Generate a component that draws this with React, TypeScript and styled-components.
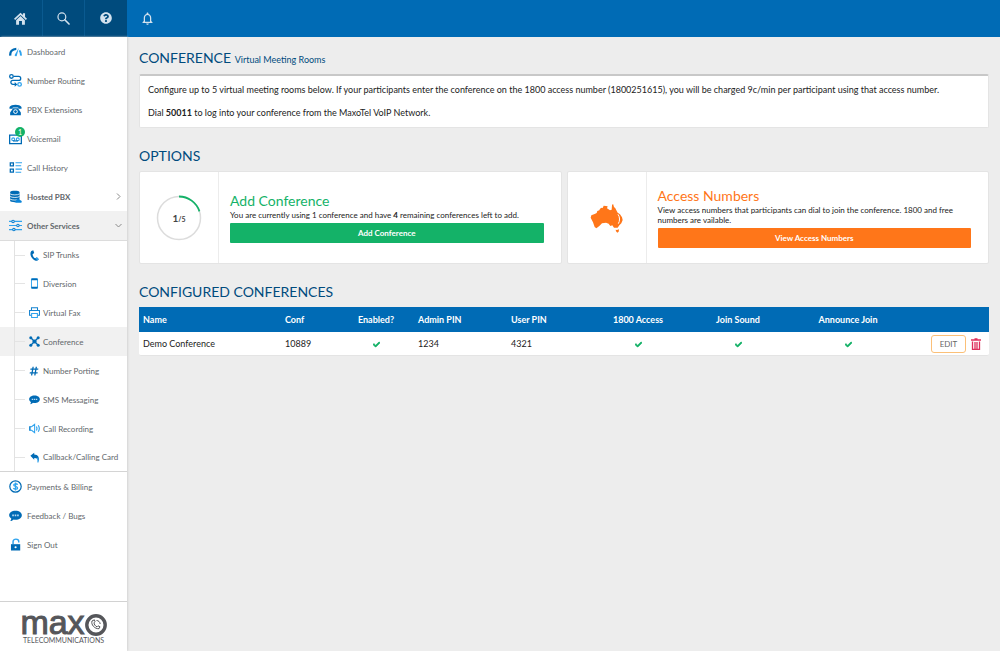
import React from "react";
import styled, { createGlobalStyle, css } from "styled-components";
import { FaCheck, FaHashtag, FaQuestionCircle } from "react-icons/fa";
import { MdNotificationsNone } from "react-icons/md";

const NAVY = "#004b7d";
const BLUE = "#006bb5";
const SKY = "#2ea3ee";
const GREEN = "#14b268";
const ORANGE = "#ff7619";

const GlobalStyle = createGlobalStyle`
  *, *::before, *::after { box-sizing: border-box; }
  body {
    margin: 0;
    background: #ededed;
    color: #222;
    font-family: Lato, "Liberation Sans", sans-serif;
    font-size: 9px;
    line-height: 12px;
  }
  button { font: inherit; cursor: pointer; }
  svg { display: block; }
`;

const Shell = styled.div`
  display: flex;
  flex-direction: column;
  min-height: 100vh;
`;

const TopBar = styled.header`
  display: flex;
  height: 37px;
  background: ${BLUE};
`;

const TopGroup = styled.div`
  display: flex;
  width: 127px;
  background: ${NAVY};
`;

const TopButton = styled.button`
  display: flex;
  align-items: center;
  justify-content: center;
  width: 41px;
  height: 36px;
  padding: 0;
  border: 0;
  background: transparent;
  color: #d3e2ee;
  ${TopGroup} & { flex: 1; }
  ${TopGroup} & + & { border-left: 1px solid #0a5a90; }
`;

const Body = styled.div`
  display: flex;
  flex: 1;
`;

const Sidebar = styled.aside`
  display: flex;
  flex-direction: column;
  flex: 0 0 127px;
  min-width: 0;
  background: #fff;
  box-shadow: 1px 0 2px #d4d4d4;
`;

const Nav = styled.nav`
  flex: 1;
`;

const List = styled.ul`
  margin: 0;
  padding: 0;
  list-style: none;
`;

const SubList = styled(List)`
  border-top: 1px solid #dcdcdc;
  border-bottom: 1px solid #d4d4d4;
`;

const NavLink = styled.a<{ $strong?: boolean; $active?: boolean }>`
  display: flex;
  align-items: center;
  gap: 5px;
  height: 29px;
  padding: 0 5px 0 9px;
  color: #62676b;
  font-size: 8px;
  font-weight: ${(p) => (p.$strong ? 700 : 400)};
  text-decoration: none;
  white-space: nowrap;
  background: ${(p) => (p.$active ? "#f1f1f1" : "transparent")};
`;

const SubLink = styled(NavLink)`
  gap: 3px;
  padding: 0 0 0 14px;
  ${SubList} li:first-child & { height: 28px; }
  ${SubList} li:last-child & { height: 28px; }
`;

const Branch = styled.span`
  display: flex;
  align-items: center;
  align-self: stretch;
  width: 11px;
  border-left: 1px solid #e2e2e2;
  &::after {
    content: "";
    flex: 1;
    height: 1px;
    background: #e4e4e4;
  }
`;

const IconBox = styled.span`
  position: relative;
  display: flex;
  justify-content: center;
  width: 13px;
  color: ${BLUE};
  ${SubList} & { width: 12px; }
`;

const Label = styled.span`
  flex: 1;
`;

const Count = styled.span`
  position: absolute;
  top: -5px;
  right: -3px;
  width: 10px;
  height: 10px;
  border-radius: 5px;
  background: ${GREEN};
  color: #fff;
  font-size: 7px;
  line-height: 10px;
  text-align: center;
`;

const Brand = styled.div`
  display: flex;
  flex-direction: column;
  align-items: center;
  height: 50px;
  padding-top: 9px;
  border-top: 1px solid #d2d2d2;
  color: #55565a;
`;

const BrandName = styled.div`
  display: flex;
  align-items: flex-start;
  height: 25px;
  font: 34px/22px "Liberation Sans", sans-serif;
  -webkit-text-stroke: 1px #55565a;
  svg { align-self: flex-end; }
`;

const BrandLine = styled.div`
  font-size: 7px;
  line-height: 8px;
`;

const Main = styled.main`
  flex: 1;
  min-width: 0;
  padding: 11px 11px 12px 12px;
`;

const headingText = css`
  margin: 0;
  color: ${NAVY};
  font-weight: 400;
  font-size: 14px;
  line-height: 20px;
`;

const Title = styled.h1`
  ${headingText}
  margin-bottom: 4px;
`;

const SubTitle = styled.small`
  font-size: 9px;
`;

const Heading = styled.h2`
  ${headingText}
  margin-top: 18px;
  margin-bottom: 5px;
`;

const surface = css`
  background: #fff;
  border: 1px solid #e4e4e4;
  border-radius: 2px;
`;

const Notice = styled.section`
  ${surface}
  border-top: 2px solid #c8c8c8;
  padding: 6px 8px;
`;

const Paragraph = styled.p`
  margin: 0;
  line-height: 16px;
  & + & { margin-top: 7px; }
`;

const Options = styled.div`
  display: grid;
  grid-template-columns: 1fr 1fr;
  gap: 5px;
`;

const Card = styled.section`
  ${surface}
  display: flex;
  min-height: 93px;
`;

const CardArt = styled.div`
  display: flex;
  align-items: center;
  justify-content: center;
  flex: 0 0 79px;
  border-right: 1px solid #ececec;
`;

const CardBody = styled.div<{ $tone: string }>`
  display: flex;
  flex-direction: column;
  justify-content: center;
  flex: 1;
  padding: 0 17px 0 11px;
  h3 {
    margin: 0;
    color: ${(p) => p.$tone};
    font-size: 14px;
    font-weight: 400;
    line-height: 18px;
  }
  p {
    margin: 0 0 3px;
    font-size: 8px;
    line-height: 10px;
  }
  button {
    height: 20px;
    padding: 0;
    border: 0;
    border-radius: 1px;
    background: ${(p) => p.$tone};
    color: #fff;
    font-size: 8px;
    font-weight: 700;
  }
`;

const Table = styled.table`
  ${surface}
  width: 100%;
  table-layout: fixed;
  border-collapse: separate;
  border-spacing: 0;
  border-width: 0 0 1px;
`;

const HeadCell = styled.th<{ $center?: boolean }>`
  height: 25px;
  padding: 0 4px;
  background: ${BLUE};
  color: #fff;
  font-weight: 700;
  text-align: ${(p) => (p.$center ? "center" : "left")};
`;

const Cell = styled.td<{ $center?: boolean }>`
  height: 23px;
  padding: 0 4px;
  text-align: ${(p) => (p.$center ? "center" : "left")};
  svg { display: inline-block; vertical-align: middle; }
`;

const Actions = styled.div`
  display: flex;
  align-items: center;
  justify-content: flex-end;
  gap: 5px;
  padding-right: 4px;
`;

const EditButton = styled.button`
  width: 35px;
  height: 18px;
  padding: 0;
  border: 1px solid #fbc078;
  border-radius: 3px;
  background: #fff;
  color: #666;
  font-size: 8px;
`;

const IconButton = styled.button`
  padding: 0;
  border: 0;
  background: transparent;
`;

const Svg = ({ size = 13, children }: { size?: number; children: React.ReactNode }) => (
  <svg width={size} height={size} viewBox="0 0 16 16" fill="none" aria-hidden="true">
    {children}
  </svg>
);

const HomeIcon = () => (
  <Svg size={13}>
    <path d="M8 .8 0 8.4l1.4 1.4L8 3.6l6.6 6.2L16 8.4l-2.4-2.3V1.6h-2.6v2z" fill="currentColor" />
    <path d="M2.6 10 8 5l5.4 5v5.6H9.8V11H6.2v4.6H2.6z" fill="currentColor" />
  </Svg>
);
const SearchIcon = () => (
  <Svg size={13}>
    <circle cx="6" cy="6" r="4.8" stroke="currentColor" strokeWidth="1.5" />
    <path d="m9.6 9.6 5.2 5.2" stroke="currentColor" strokeWidth="2" strokeLinecap="round" />
  </Svg>
);
const GaugeIcon = () => (
  <Svg>
    <path d="M1.6 13C1 8 4 5 9 4.800" stroke={BLUE} strokeWidth="2.800" />
    <path d="M12.800 6.600c1.400 1.600 2 3.600 1.800 6.400" stroke={SKY} strokeWidth="2.400" />
    <path d="m7 12.400 5-8.800-2.400 9.600c-.8 1.200-3 .6-2.600-.8z" fill={SKY} />
  </Svg>
);
const RoutingIcon = () => (
  <Svg>
    <circle cx="3" cy="3" r="2.200" stroke={BLUE} strokeWidth="1.600" />
    <circle cx="13" cy="12.800" r="2.200" stroke={SKY} strokeWidth="1.600" />
    <path d="M5.600 3H12a2.400 2.400 0 0 1 0 4.800H4.800a2.500 2.500 0 0 0 0 5H8" stroke={BLUE} strokeWidth="1.600" />
    <path d="m7 9.800 3.200 3L7 15.800z" fill={BLUE} />
  </Svg>
);
const DeskPhoneIcon = () => (
  <Svg>
    <path d="M.6 7V5C3 1.400 13 1.400 15.400 5v2h-4V5.400H4.600V7z" fill={BLUE} />
    <path d="M5 6.600h6l3.600 5V15H1.400v-3.400z" fill={BLUE} />
    <circle cx="8" cy="10.600" r="2.300" stroke="#fff" strokeWidth="1.200" />
  </Svg>
);
const VoicemailIcon = () => (
  <Svg>
    <path d="M.8 3.800h14.400v10.400H.8z" stroke={BLUE} strokeWidth="1.600" />
    <circle cx="5.200" cy="9" r="1.800" stroke={SKY} strokeWidth="1.400" />
    <circle cx="10.800" cy="9" r="1.800" stroke={SKY} strokeWidth="1.400" />
    <path d="M5 11h6" stroke={BLUE} strokeWidth="1.400" />
  </Svg>
);
const HistoryIcon = () => (
  <Svg>
    <path d="M1.600 2.200h3.800v3.800H1.600zM1.600 10h3.800v3.800H1.600z" stroke={BLUE} strokeWidth="1.600" />
    <path d="M8 2.200h8M8 5.800h7M8 10h8M8 13.800h7" stroke={SKY} strokeWidth="1.400" />
  </Svg>
);
const ServerIcon = () => (
  <Svg>
    <path d="M1.400 2.800C1.400.4 13 .4 13 2.800v10.400c0 2.400-11.600 2.400-11.600 0z" fill={BLUE} />
    <path d="M1.400 4.800c2 1.600 9.600 1.600 11.600 0M1.400 8c2 1.600 9.600 1.600 11.600 0M1.400 11.200c2 1.600 9.600 1.600 11.600 0" stroke="#fff" />
    <path d="M9 15.800c-2-.2-1.800-2.800 0-3 .4-2.400 4-2.400 4.400-.2 3 0 3 3.200.6 3.200z" fill="#0a84d8" />
  </Svg>
);
const SlidersIcon = () => (
  <Svg>
    <path d="M0 3h16M0 8h16M0 13h16" stroke={SKY} strokeWidth="1.400" />
    <g fill="#fff" stroke="#1582cf" strokeWidth="1.400">
      <circle cx="5" cy="3" r="1.500" />
      <circle cx="11" cy="8" r="1.500" />
      <circle cx="6" cy="13" r="1.500" />
    </g>
  </Svg>
);
const HandsetIcon = () => (
  <Svg size={11}>
    <path d="M3.400 1.600 6.200.4l1.400 4-2.400 1.600C5.400 8.400 7 11 9 12l2.400-1.600 3 3.200-2.600 2.200C5 16-.6 6 3.400 1.600z" fill={BLUE} />
    <path d="m9.400 12.200 2.200-1.600 2.600 3-2 1.800z" fill={SKY} />
  </Svg>
);
const MobileIcon = () => (
  <Svg size={11}>
    <rect x="3.600" y="1" width="8.800" height="14" rx="1" stroke={SKY} strokeWidth="1.400" />
    <path d="M3.400 2h9.200M3.400 14h9.200" stroke={BLUE} strokeWidth="2.200" />
  </Svg>
);
const PrinterIcon = () => (
  <Svg size={11}>
    <path d="M3.600 5V1h8.800v4M3.600 12H.8V5h14.400v7h-2.800" stroke="#1582cf" strokeWidth="1.500" />
    <path d="M3.800 9.400h8.400v5.800H3.800z" stroke={SKY} strokeWidth="1.500" />
  </Svg>
);
const HubIcon = () => (
  <Svg size={11}>
    <path d="m2.600 2.600 10.800 10.800M13.400 2.600 2.600 13.400" stroke={BLUE} strokeWidth="2" />
    <g fill={BLUE}>
      <circle cx="2.600" cy="2.600" r="2.200" />
      <circle cx="13.400" cy="2.600" r="2.200" />
      <circle cx="2.600" cy="13.400" r="2.200" />
      <circle cx="13.400" cy="13.400" r="2.200" />
      <circle cx="8" cy="8" r="3" />
    </g>
  </Svg>
);
const ChatIcon = ({ size = 11 }: { size?: number }) => (
  <Svg size={size}>
    <path d="M8 2c4.600 0 7.800 2.400 7.800 5.600S12.600 13.200 8 13.200c-.8 0-1.600-.2-2.200-.4-1 1-2.400 2-4.200 2 .8-1 1.200-2 1.200-3.200C1.200 10.600.2 9.200.2 7.600.2 4.400 3.400 2 8 2z" fill={BLUE} />
    <path d="M4 6.800h2v2H4zM7 6.800h2v2H7zM10 6.800h2v2h-2z" fill="#b7dcf6" />
  </Svg>
);
const SpeakerIcon = () => (
  <Svg size={11}>
    <path d="M1 5.400h2.800L8.200 2v12l-4.400-3.400H1z" stroke={SKY} strokeWidth="1.500" />
    <path d="M10.800 5c1 2 1 4 0 6M13.400 3.200c2 3 2 6.600 0 9.600" stroke={SKY} strokeWidth="1.700" />
    <path d="M1.400 5v6" stroke={BLUE} strokeWidth="1.400" />
  </Svg>
);
const ReplyIcon = () => (
  <Svg size={11}>
    <path d="M2 5.600 7.600 1v2.800c5.800 0 8 4.200 6.200 11.200-.2-4.400-1.800-6.400-6.200-6.400v2.800z" fill={BLUE} />
    <path d="M12 8.600c1 1.600 1.400 3.400 1 6.600" stroke={SKY} strokeWidth="1.600" />
  </Svg>
);
const DollarIcon = () => (
  <Svg>
    <circle cx="8" cy="8" r="7" stroke={BLUE} strokeWidth="1.500" />
    <path d="M10.600 5.800C9.800 4.200 5.800 4.200 5.800 6.200c0 2.200 4.800 1.200 4.800 3.600 0 2-4.200 2-5.200.2M8 3v10" stroke={SKY} strokeWidth="1.600" />
  </Svg>
);
const LockIcon = () => (
  <Svg>
    <path d="M5 7.600V4.400c0-4 7-4 7 0v1.200" stroke={SKY} strokeWidth="1.800" />
    <path d="M2.400 7.600h11.400v7.800H2.400z" fill={BLUE} />
    <circle cx="8.100" cy="11.400" r="1.300" fill="#fff" />
  </Svg>
);
const Chevron = ({ down }: { down?: boolean }) => (
  <svg width="7" height="7" viewBox="0 0 7 7" fill="none" aria-hidden="true">
    <path d={down ? "M.5 2 3.500 5l3-3" : "M2 .5l3 3-3 3"} stroke="#8a8a8a" />
  </svg>
);
const BrandMark = () => (
  <svg width="22" height="22" viewBox="0 0 22 22" fill="none" aria-hidden="true">
    <circle cx="11" cy="11" r="9.200" stroke="#55565a" strokeWidth="3.400" />
    <path d="M7 7c-1.200 3.500 2.500 8 7 7.700l1-1.900-2-1-1 1c-1.500-.5-3-2.500-3-4l1-1-.6-2z" stroke="#55565a" />
    <path d="M11.500 6.500c2 0 3.500 1.500 3.700 3.500" stroke="#55565a" />
  </svg>
);
const Ring = () => (
  <svg width="46" height="46" viewBox="0 0 46 46" fill="none" role="img" aria-label="1 of 5 used">
    <circle cx="23" cy="23" r="21.500" stroke="#dcdcdc" strokeWidth="1.500" />
    <path d="M23 1.500A21.500 21.500 0 0 1 43.450 16.360" stroke={GREEN} strokeWidth="1.800" />
    <text x="23" y="27" textAnchor="middle" fill="#444" fontSize="10" fontWeight="700">
      1<tspan fontSize="7">/5</tspan>
    </text>
  </svg>
);
const Australia = () => (
  <svg width="34" height="30" viewBox="0 0 102 90" aria-hidden="true">
    <path
      fill={ORANGE}
      d="M2 44 4 37 14 33 20 30 22 24 28 22 30 17 35 14 38 15 41 8 48 9 53 10 51 16 60 22 65 20 66 7 69 2 72 12 76 16 79 22 83 29 90 34 96 43 98 51 94 61 88 67 83 74 72 74 67 67 61 69 56 62 48 59 36 61 28 69 19 76 14 72 9 58z"
    />
    <path d="M84 34c6 8 6 20 1 28" stroke="#fff" strokeWidth="3" fill="none" />
    <path d="m77 80 4 1 6-2-1 7-4 3-4-4z" fill={ORANGE} />
  </svg>
);
const Trash = () => (
  <svg width="10" height="12" viewBox="0 0 10 12" fill="none" aria-hidden="true">
    <path d="M0 2h10M3.500 1h3" stroke="#de2f5c" strokeWidth="1.500" />
    <path d="M1.500 3.500v8h7v-8M4 4v7M6 4v7" stroke="#de2f5c" strokeWidth="1.300" />
  </svg>
);

type Item = { label: string; icon: React.ReactNode; active?: boolean };

const topItems: Item[] = [
  { label: "Dashboard", icon: <GaugeIcon /> },
  { label: "Number Routing", icon: <RoutingIcon /> },
  { label: "PBX Extensions", icon: <DeskPhoneIcon /> },
  { label: "Voicemail", icon: <><VoicemailIcon /><Count>1</Count></> },
  { label: "Call History", icon: <HistoryIcon /> },
];
const services: Item[] = [
  { label: "SIP Trunks", icon: <HandsetIcon /> },
  { label: "Diversion", icon: <MobileIcon /> },
  { label: "Virtual Fax", icon: <PrinterIcon /> },
  { label: "Conference", icon: <HubIcon />, active: true },
  { label: "Number Porting", icon: <FaHashtag size={10} /> },
  { label: "SMS Messaging", icon: <ChatIcon /> },
  { label: "Call Recording", icon: <SpeakerIcon /> },
  { label: "Callback/Calling Card", icon: <ReplyIcon /> },
];
const bottomItems: Item[] = [
  { label: "Payments & Billing", icon: <DollarIcon /> },
  { label: "Feedback / Bugs", icon: <ChatIcon size={13} /> },
  { label: "Sign Out", icon: <LockIcon /> },
];
const columns = [
  { label: "Name", width: 142 },
  { label: "Conf", width: 57 },
  { label: "Enabled?", width: 76, center: true },
  { label: "Admin PIN", width: 93 },
  { label: "User PIN", width: 83 },
  { label: "1800 Access", width: 96, center: true },
  { label: "Join Sound", width: 104, center: true },
  { label: "Announce Join", width: 116, center: true },
  { label: "", width: 83 },
];

const NavItem = ({ item }: { item: Item }) => (
  <li>
    <NavLink href="#">
      <IconBox>{item.icon}</IconBox>
      <Label>{item.label}</Label>
    </NavLink>
  </li>
);

const Tick = () => <FaCheck size={7} color={GREEN} stroke={GREEN} strokeWidth={50} aria-label="Yes" />;

export default function App() {
  return (
    <Shell>
      <GlobalStyle />
      <TopBar>
        <TopGroup>
          <TopButton aria-label="Home"><HomeIcon /></TopButton>
          <TopButton aria-label="Search"><SearchIcon /></TopButton>
          <TopButton aria-label="Help"><FaQuestionCircle size={12} /></TopButton>
        </TopGroup>
        <TopButton aria-label="Notifications"><MdNotificationsNone size={15} /></TopButton>
      </TopBar>
      <Body>
        <Sidebar>
          <Nav>
            <List>
              {topItems.map((item) => <NavItem key={item.label} item={item} />)}
              <li>
                <NavLink href="#" $strong>
                  <IconBox><ServerIcon /></IconBox>
                  <Label>Hosted PBX</Label>
                  <Chevron />
                </NavLink>
              </li>
              <li>
                <NavLink href="#" $strong $active>
                  <IconBox><SlidersIcon /></IconBox>
                  <Label>Other Services</Label>
                  <Chevron down />
                </NavLink>
                <SubList>
                  {services.map((item) => (
                    <li key={item.label}>
                      <SubLink href="#" $active={item.active}>
                        <Branch />
                        <IconBox>{item.icon}</IconBox>
                        <Label>{item.label}</Label>
                      </SubLink>
                    </li>
                  ))}
                </SubList>
              </li>
              {bottomItems.map((item) => <NavItem key={item.label} item={item} />)}
            </List>
          </Nav>
          <Brand>
            <BrandName>max<BrandMark /></BrandName>
            <BrandLine>TELECOMMUNICATIONS</BrandLine>
          </Brand>
        </Sidebar>
        <Main>
          <Title>CONFERENCE <SubTitle>Virtual Meeting Rooms</SubTitle></Title>
          <Notice>
            <Paragraph>
              Configure up to 5 virtual meeting rooms below. If your participants enter the conference on the 1800 access number (1800251615), you will be charged 9c/min per participant using that access number.
            </Paragraph>
            <Paragraph>
              Dial <b>50011</b> to log into your conference from the MaxoTel VoIP Network.
            </Paragraph>
          </Notice>
          <Heading>OPTIONS</Heading>
          <Options>
            <Card>
              <CardArt><Ring /></CardArt>
              <CardBody $tone={GREEN}>
                <h3>Add Conference</h3>
                <p>You are currently using 1 conference and have <b>4</b> remaining conferences left to add.</p>
                <button>Add Conference</button>
              </CardBody>
            </Card>
            <Card>
              <CardArt><Australia /></CardArt>
              <CardBody $tone={ORANGE}>
                <h3>Access Numbers</h3>
                <p>View access numbers that participants can dial to join the conference. 1800 and free numbers are vailable.</p>
                <button>View Access Numbers</button>
              </CardBody>
            </Card>
          </Options>
          <Heading>CONFIGURED CONFERENCES</Heading>
          <Table>
            <colgroup>
              {columns.map((c, i) => <col key={i} width={c.width} />)}
            </colgroup>
            <thead>
              <tr>
                {columns.map((c, i) => <HeadCell key={i} $center={c.center}>{c.label}</HeadCell>)}
              </tr>
            </thead>
            <tbody>
              <tr>
                <Cell>Demo Conference</Cell>
                <Cell>10889</Cell>
                <Cell $center><Tick /></Cell>
                <Cell>1234</Cell>
                <Cell>4321</Cell>
                <Cell $center><Tick /></Cell>
                <Cell $center><Tick /></Cell>
                <Cell $center><Tick /></Cell>
                <Cell>
                  <Actions>
                    <EditButton>EDIT</EditButton>
                    <IconButton aria-label="Delete"><Trash /></IconButton>
                  </Actions>
                </Cell>
              </tr>
            </tbody>
          </Table>
        </Main>
      </Body>
    </Shell>
  );
}
